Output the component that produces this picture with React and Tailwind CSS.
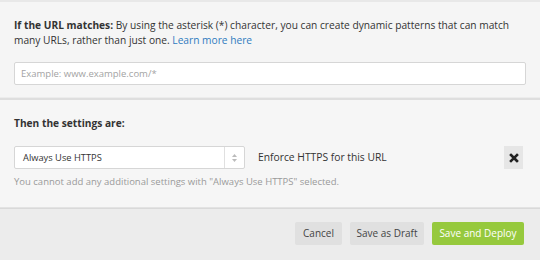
export default function App() {
  return (
    <div className="w-[540px] h-[260px] overflow-hidden bg-[#f5f5f5] text-[#333] font-['Open_Sans',sans-serif] text-[10.2px] flex flex-col">
      <div className="h-[2px] bg-[#e8e8e8]" />
      <div className="px-[14px] pt-[16px] pb-[12px]">
        <p className="leading-[15px]">
          <span className="font-bold">If the URL matches:</span> By using the asterisk (*) character, you can create dynamic patterns that can match many URLs, rather than just one.{' '}
          <span className="text-[#2f7bbf]">Learn more here</span>
        </p>
        <input
          className="mt-[14px] w-full h-[23px] bg-white border border-[#d6d6d6] rounded-[2px] px-[6px] text-[9.5px] outline-none placeholder:text-[#a3a3a3]"
          placeholder="Example: www.example.com/*"
        />
      </div>
      <div className="h-[1px] bg-[#ececec]" />
      <div className="h-[2px] bg-[#dedede]" />
      <div className="px-[14px] pt-[16px] pb-[19px] bg-[#f6f6f6]">
        <p className="font-bold leading-[15px]">Then the settings are:</p>
        <div className="mt-[15px] flex items-center">
          <div className="w-[231px] h-[23px] bg-white border border-[#d6d6d6] rounded-[2px] flex items-center">
            <span className="flex-1 pl-[8px] text-[9.3px]">Always Use HTTPS</span>
            <div className="w-[20px] h-full border-l border-[#e0e0e0] flex flex-col items-center justify-center gap-[2px]">
              <svg width="5" height="3" viewBox="0 0 5 3"><path d="M0 3L2.5 0L5 3Z" fill="#bbb" /></svg>
              <svg width="5" height="3" viewBox="0 0 5 3"><path d="M0 0L2.5 3L5 0Z" fill="#bbb" /></svg>
            </div>
          </div>
          <span className="ml-[13px] text-[10.3px]">Enforce HTTPS for this URL</span>
          <button className="ml-auto mr-[3px] w-[19px] h-[23px] bg-[#e6e6e6] flex items-center justify-center">
            <svg width="10" height="10" viewBox="0 0 10 10"><path d="M2 2L8 8M8 2L2 8" stroke="#222" strokeWidth="2.6" strokeLinecap="square" /></svg>
          </button>
        </div>
        <p className="mt-[6px] text-[#9a9a9a] text-[9.5px] leading-[13px]">You cannot add any additional settings with "Always Use HTTPS" selected.</p>
      </div>
      <div className="h-[1px] bg-[#e3e3e3]" />
      <div className="h-[1px] bg-[#d9d9d9]" />
      <div className="flex-1 bg-[#ececec] flex justify-end items-start pt-[13px] pr-[16px] gap-[8px] text-[10px]">
        <button className="h-[23px] w-[47px] bg-[#e0e0e0] rounded-[2px] text-[#444]">Cancel</button>
        <button className="h-[23px] w-[74px] bg-[#e0e0e0] rounded-[2px] text-[#444]">Save as Draft</button>
        <button className="h-[23px] w-[92px] bg-[#96c93d] rounded-[2px] text-white">Save and Deploy</button>
      </div>
    </div>
  )
}
